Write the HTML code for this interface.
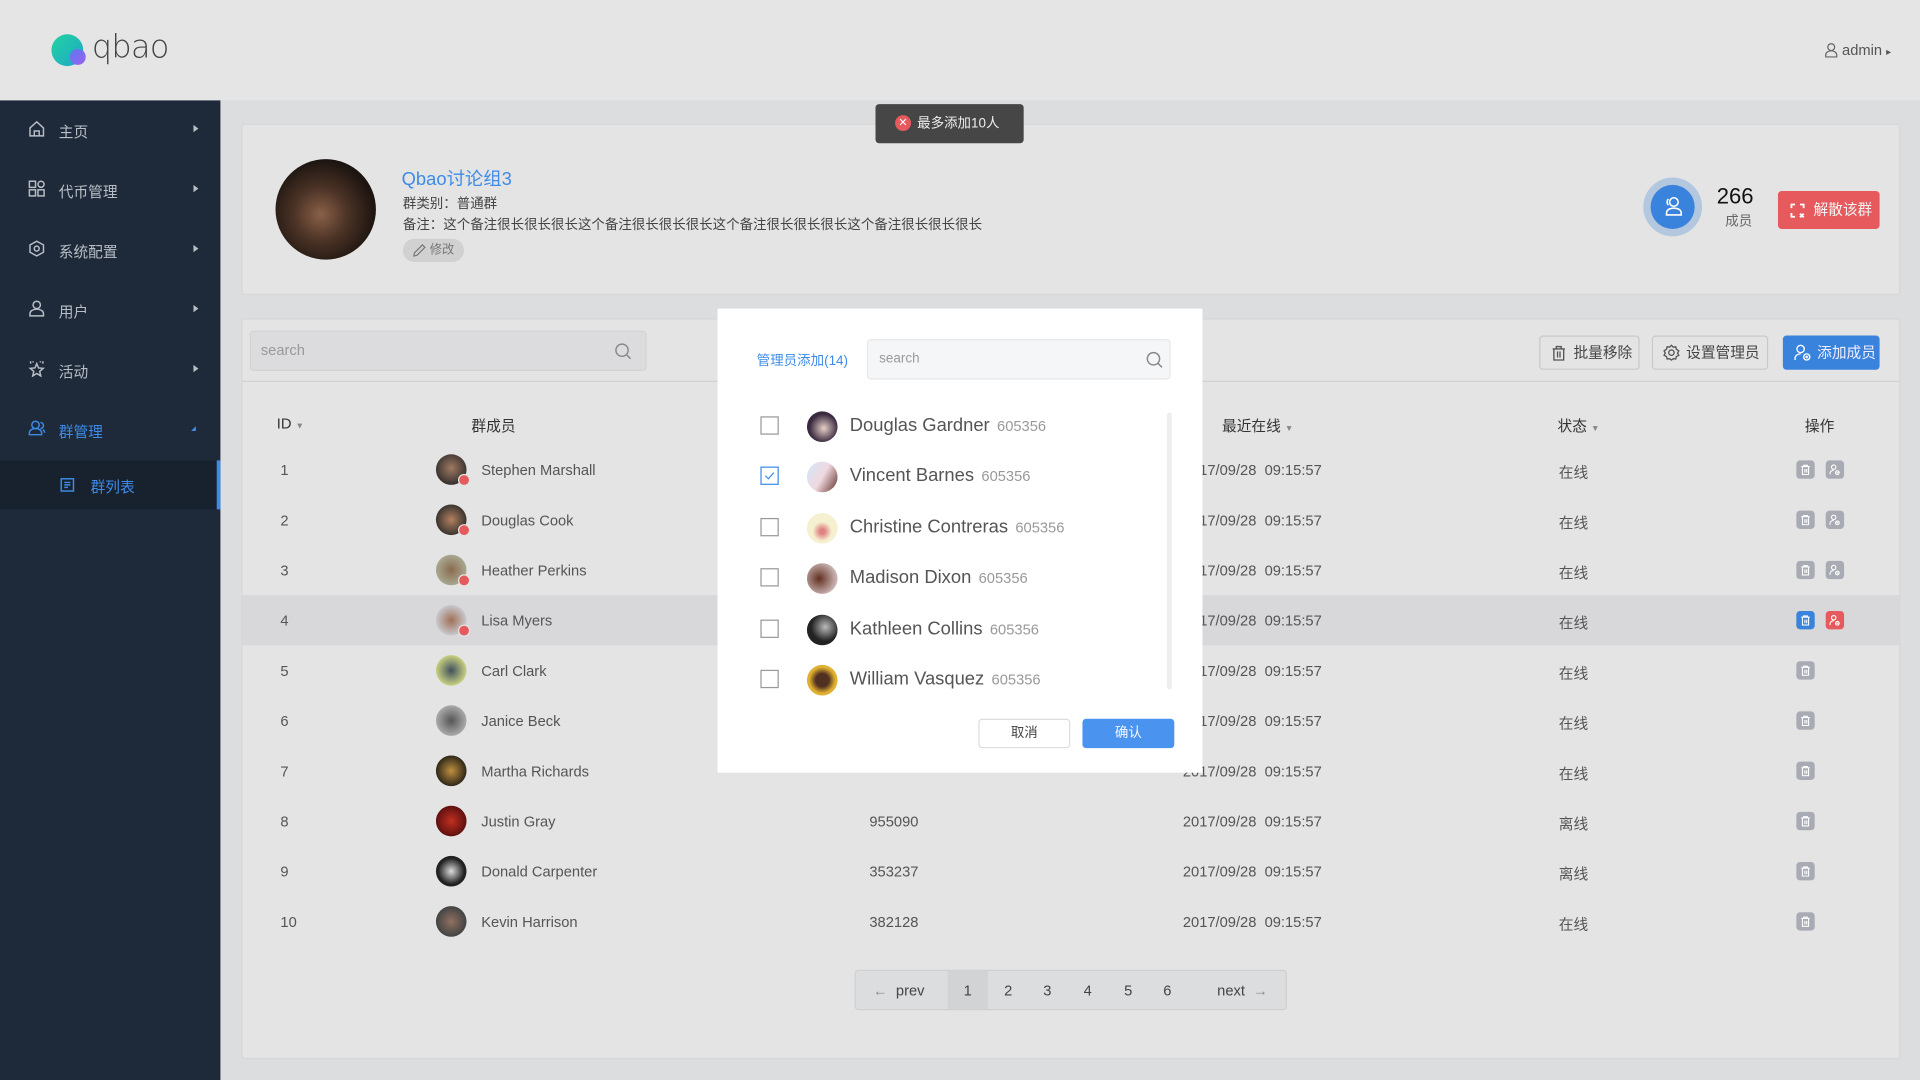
<!DOCTYPE html>
<html><head><meta charset="utf-8">
<style>
*{box-sizing:border-box;margin:0;padding:0}
html,body{width:1920px;height:1080px;overflow:hidden;background:#dcdddf}
#w{position:absolute;left:0;top:0;width:1568px;height:882px;transform:scale(1.22449);transform-origin:0 0;font-family:"Liberation Sans","Noto Sans CJK SC",sans-serif;color:#555;font-size:12px;background:#dcdddf}
.a{position:absolute}
.hdr{left:0;top:0;width:1568px;height:82px;background:#e5e5e5}
.side{left:0;top:82px;width:180px;height:800px;background:#1e2a39}
.mi{position:absolute;left:0;width:180px;height:49px;color:#b9bec6;font-size:12px}
.mi span{position:absolute;left:48px;top:17px}
.mi svg{position:absolute;left:23px;top:16px}
.mi i{position:absolute;left:158px;top:20px;border-left:4px solid #b9bec6;border-top:3.5px solid transparent;border-bottom:3.5px solid transparent}
.card{background:#e4e4e4;border:1px solid #d6d6d6;border-radius:3px}
.row{position:absolute;left:0;width:1354px;height:41px;font-size:12px;color:#555}
.row div{position:absolute;top:14px}
.av{width:25px;height:25px;border-radius:50%;position:absolute;top:8px!important}
.bd{position:absolute;width:10px;height:10px;border-radius:50%;background:#e55a5c;border:1px solid #e4e4e4}
.ib{position:absolute;top:13px!important;width:15px;height:15px;border-radius:3px;background:#a9abb4}
.ib svg{position:absolute;left:3px;top:3px}
.btn{position:absolute;height:28px;border:1px solid #c9c9c9;border-radius:3px;font-size:12px;color:#444;line-height:26px}
.mr{position:absolute;left:0;width:396px;height:41px}
.cb{position:absolute;left:35px;top:13px;width:15px;height:15px;border:1px solid #999;background:#fff}
.mav{position:absolute;left:73px;top:9px;width:25px;height:25px;border-radius:50%}
.mn{position:absolute;left:108px;top:12px;font-size:15px;color:#555}
.mn small{font-size:12px;color:#999;margin-left:6px}
</style></head><body><div id="w">
<svg width="0" height="0" style="position:absolute"><defs>
<symbol id="tr" viewBox="0 0 9 9"><path d="M1 2h7M3 2V1h3v1M2 2v6.5h5V2M4 4v3M5.5 4v3" fill="none" stroke="#fff" stroke-width=".9"/></symbol>
<symbol id="ur" viewBox="0 0 9 9"><circle cx="3.5" cy="2.5" r="1.8" fill="none" stroke="#fff" stroke-width=".9"/><path d="M.5 8.5V7.5c0-1.5 1.5-2.5 3-2.5M6.5 5.5a1.5 1.5 0 110 3 1.5 1.5 0 010-3zM5.7 7h1.6" fill="none" stroke="#fff" stroke-width=".9"/></symbol>
</defs></svg>
<div class="a hdr">
  <div class="a" style="left:42px;top:28px;width:26px;height:26px;border-radius:50%;background:linear-gradient(135deg,#22d3a0,#1ea7c8)"></div>
  <div class="a" style="left:57px;top:40px;width:13px;height:13px;border-radius:50%;background:linear-gradient(135deg,#5a7cf0,#9d5ff0)"></div>
  <div class="a" style="left:75px;top:24px;font-size:26px;color:#444;letter-spacing:-0.5px;font-weight:300;font-family:'DejaVu Sans','Liberation Sans',sans-serif;-webkit-text-stroke:0">qbao</div>
  <div class="a" style="left:1490px;top:34px;font-size:12px;color:#555">
    <svg width="11" height="12" viewBox="0 0 11 12" style="vertical-align:-2px"><circle cx="5.5" cy="3.5" r="2.8" fill="none" stroke="#666"/><path d="M1 11.5v-1.5c0-2 2-3.5 4.5-3.5s4.5 1.5 4.5 3.5v1.5z" fill="none" stroke="#666"/></svg> admin <span style="font-size:8px">▸</span></div>
</div>
<div class="a side">
  <div class="mi" style="top:0"><svg width="14" height="14" viewBox="0 0 14 14" fill="none" stroke="#b9bec6" stroke-width="1.2"><path d="M1.5 6.5L7 1.5l5.5 5V13h-11z M5 13V9h4v4"/></svg><span>主页</span><i></i></div>
  <div class="mi" style="top:49px"><svg width="14" height="14" viewBox="0 0 14 14" fill="none" stroke="#b9bec6" stroke-width="1.2"><rect x="1" y="1" width="5" height="5"/><rect x="1" y="8" width="5" height="5"/><rect x="8" y="8" width="5" height="5"/><circle cx="10.5" cy="3.5" r="2.5"/></svg><span>代币管理</span><i></i></div>
  <div class="mi" style="top:98px"><svg width="14" height="14" viewBox="0 0 14 14" fill="none" stroke="#b9bec6" stroke-width="1.2"><path d="M7 1l5.5 3v6L7 13 1.5 10V4z"/><circle cx="7" cy="7" r="2"/></svg><span>系统配置</span><i></i></div>
  <div class="mi" style="top:147px"><svg width="14" height="14" viewBox="0 0 14 14" fill="none" stroke="#b9bec6" stroke-width="1.2"><circle cx="7" cy="4" r="3"/><path d="M1.5 13v-2c0-2 2.5-3.5 5.5-3.5s5.5 1.5 5.5 3.5v2z"/></svg><span>用户</span><i></i></div>
  <div class="mi" style="top:196px"><svg width="14" height="14" viewBox="0 0 14 14" fill="none" stroke="#b9bec6" stroke-width="1.2"><path d="M7 3l1.5 3.5 3.8.3-2.9 2.5.9 3.7L7 11l-3.3 2 .9-3.7L1.7 6.8l3.8-.3z M2 1v2 M4 1v1 M10 1v1 M12 1v2"/></svg><span>活动</span><i></i></div>
  <div class="mi" style="top:245px;color:#3d8be8"><svg width="14" height="14" viewBox="0 0 14 14" fill="none" stroke="#3d8be8" stroke-width="1.2"><circle cx="6" cy="4" r="3"/><path d="M1 12v-1.5C1 8.5 3 7 6 7s5 1.5 5 3.5V12z M10 2a2.5 2.5 0 010 5 M12 8c1 .6 1.5 1.5 1.5 2.5"/></svg><span>群管理</span><i style="border:none;border-right:4px solid #3d8be8;border-top:4px solid transparent;left:156px;top:21px"></i></div>
  <div class="a" style="left:0;top:294px;width:180px;height:40px;background:#18222f;border-right:3px solid #3d8be8">
    <svg class="a" style="left:49px;top:14px" width="12" height="12" viewBox="0 0 12 12" fill="none" stroke="#3d8be8" stroke-width="1.2"><rect x="1" y="1" width="10" height="10"/><path d="M3.5 4h5M3.5 6h5M3.5 8h3"/></svg>
    <span class="a" style="left:74px;top:13px;color:#3d8be8">群列表</span></div>
</div>

<div class="a card" style="left:197px;top:101px;width:1355px;height:140px">
  <div class="a" style="left:27px;top:28px;width:82px;height:82px;border-radius:50%;background:radial-gradient(circle at 45% 55%,#8a6048 0%,#4a3225 35%,#1c1410 70%,#0d0a08 100%)"></div>
  <div class="a" style="left:130px;top:33px;font-size:15px;color:#3d8be8">Qbao讨论组3</div>
  <div class="a" style="left:131px;top:56px;font-size:11px;color:#444">群类别：普通群</div>
  <div class="a" style="left:131px;top:73px;font-size:11px;color:#444">备注：这个备注很长很长很长这个备注很长很长很长这个备注很长很长很长这个备注很长很长很长</div>
  <div class="a" style="left:131px;top:93px;width:50px;height:19px;border-radius:10px;background:#d1d1d1;font-size:10px;color:#777;line-height:19px;padding-left:22px">修改
    <svg class="a" style="left:8px;top:4px" width="11" height="11" viewBox="0 0 11 11" fill="none" stroke="#777"><path d="M1 10l.5-2.5L8 1l2 2-6.5 6.5z"/></svg></div>
  <div class="a" style="left:1144px;top:43px;width:48px;height:48px;border-radius:50%;background:#b3c7df"></div>
  <div class="a" style="left:1150px;top:49px;width:36px;height:36px;border-radius:50%;background:#3a83dd">
    <svg class="a" style="left:10px;top:9px" width="17" height="17" viewBox="0 0 17 17" fill="none" stroke="#fff" stroke-width="1.3"><circle cx="9" cy="5" r="3.5"/><path d="M3 15.5v-1.5c0-2.5 2.5-4 6-4s6 1.5 6 4v1.5z M4.5 2.5a3.5 3.5 0 000 5"/></svg></div>
  <div class="a" style="left:1204px;top:48px;font-size:18px;color:#111">266</div>
  <div class="a" style="left:1211px;top:70px;font-size:11px;color:#666">成员</div>
  <div class="a" style="left:1254px;top:54px;width:83px;height:31px;border-radius:3px;background:#e65a5d;color:#f3f3f3;font-size:12px;line-height:31px;padding-left:29px">解散该群
    <svg class="a" style="left:10px;top:10px" width="12" height="12" viewBox="0 0 12 12" fill="none" stroke="#fff" stroke-width="1.5"><path d="M1 4V1h3M8 1h3v3M1 8v3h3M8 8.5l3 3M11 8.5l-3 3"/></svg></div>
</div>

<div class="a card" style="left:197px;top:260px;width:1355px;height:605px">
  <div class="a" style="left:0;top:50px;width:1353px;height:1px;background:#d2d2d2"></div>
  <div class="a" style="left:6px;top:9px;width:324px;height:33px;border-radius:3px;background:#dcdcde;border:1px solid #d3d3d3;color:#999;font-size:12px;line-height:31px;padding-left:8px">search
    <svg class="a" style="left:297px;top:9px" width="14" height="14" viewBox="0 0 14 14" fill="none" stroke="#888" stroke-width="1.2"><circle cx="6" cy="6" r="5"/><path d="M9.7 9.7L13 13"/></svg></div>
  <div class="btn" style="left:1059px;top:13px;width:82px;padding-left:27px">批量移除<svg class="a" style="left:9px;top:7px" width="12" height="13" viewBox="0 0 12 13" fill="none" stroke="#555" stroke-width="1.1"><path d="M1 3h10M4 3V1h4v2M2 3v9h8V3M5 5v5M7 5v5"/></svg></div>
  <div class="btn" style="left:1151px;top:13px;width:95px;padding-left:27px">设置管理员<svg class="a" style="left:8px;top:6px" width="14" height="14" viewBox="0 0 14 14" fill="none" stroke="#555" stroke-width="1.1"><circle cx="7" cy="7" r="2.2"/><path d="M7 1l1.5 1.5 2-.3.5 2L13 5.5 12 7.3l1 1.9-2 1-.5 2-2-.3L7 13l-1.5-1.1-2 .3-.5-2-2-1L2 7.3 1 5.5l2-1.3.5-2 2 .3z"/></svg></div>
  <div class="btn" style="left:1258px;top:13px;width:79px;background:#3a83dd;border-color:#3a83dd;color:#eef;padding-left:27px">添加成员<svg class="a" style="left:8px;top:6px" width="14" height="14" viewBox="0 0 14 14" fill="none" stroke="#fff" stroke-width="1.1"><circle cx="5.5" cy="4" r="3"/><path d="M1 13v-1.5c0-2 2-3.5 4.5-3.5 M10.5 8a2.5 2.5 0 110 5 2.5 2.5 0 010-5zM10.5 9.3v2.4M9.3 10.5h2.4"/></svg></div>

  <div class="a" style="left:28px;top:78px;color:#333">ID <span style="font-size:7px;color:#888">▼</span></div>
  <div class="a" style="left:187px;top:78px;color:#333">群成员</div>
  <div class="a" style="left:800px;top:78px;color:#333">最近在线 <span style="font-size:7px;color:#888">▼</span></div>
  <div class="a" style="left:1074px;top:78px;color:#333">状态 <span style="font-size:7px;color:#888">▼</span></div>
  <div class="a" style="left:1276px;top:78px;color:#333">操作</div>

  <div class="a" style="left:0;top:102px;width:1353px;height:410px">
   <div class="row" style="top:0"><div style="left:31px">1</div><div class="av" style="left:158px;background:radial-gradient(circle at 50% 45%,#a07a62,#3a3330 70%)"></div><div class="bd" style="left:176px;top:24px"></div><div style="left:195px">Stephen Marshall</div><div style="left:768px">2017/09/28&nbsp; 09:15:57</div><div style="left:1075px">在线</div><div class="ib" style="left:1269px"><svg width="9" height="9"><use href="#tr"/></svg></div><div class="ib" style="left:1293px"><svg width="9" height="9"><use href="#ur"/></svg></div></div>
   <div class="row" style="top:41px"><div style="left:31px">2</div><div class="av" style="left:158px;background:radial-gradient(circle at 50% 50%,#b48060,#3b3530 70%)"></div><div class="bd" style="left:176px;top:24px"></div><div style="left:195px">Douglas Cook</div><div style="left:768px">2017/09/28&nbsp; 09:15:57</div><div style="left:1075px">在线</div><div class="ib" style="left:1269px"><svg width="9" height="9"><use href="#tr"/></svg></div><div class="ib" style="left:1293px"><svg width="9" height="9"><use href="#ur"/></svg></div></div>
   <div class="row" style="top:82px"><div style="left:31px">3</div><div class="av" style="left:158px;background:radial-gradient(circle at 50% 50%,#8a6a50,#a8a890 70%)"></div><div class="bd" style="left:176px;top:24px"></div><div style="left:195px">Heather Perkins</div><div style="left:768px">2017/09/28&nbsp; 09:15:57</div><div style="left:1075px">在线</div><div class="ib" style="left:1269px"><svg width="9" height="9"><use href="#tr"/></svg></div><div class="ib" style="left:1293px"><svg width="9" height="9"><use href="#ur"/></svg></div></div>
   <div class="row" style="top:123px;background:#d8d8da"><div style="left:31px">4</div><div class="av" style="left:158px;background:radial-gradient(circle at 50% 50%,#a07058,#c8c8cc 70%)"></div><div class="bd" style="left:176px;top:24px"></div><div style="left:195px">Lisa Myers</div><div style="left:768px">2017/09/28&nbsp; 09:15:57</div><div style="left:1075px">在线</div><div class="ib" style="left:1269px;background:#3a83dd"><svg width="9" height="9"><use href="#tr"/></svg></div><div class="ib" style="left:1293px;background:#e65a5d"><svg width="9" height="9"><use href="#ur"/></svg></div></div>
   <div class="row" style="top:164px"><div style="left:31px">5</div><div class="av" style="left:158px;background:radial-gradient(circle at 50% 50%,#405060,#c8d080 70%)"></div><div style="left:195px">Carl Clark</div><div style="left:768px">2017/09/28&nbsp; 09:15:57</div><div style="left:1075px">在线</div><div class="ib" style="left:1269px"><svg width="9" height="9"><use href="#tr"/></svg></div></div>
   <div class="row" style="top:205px"><div style="left:31px">6</div><div class="av" style="left:158px;background:radial-gradient(circle at 50% 50%,#555,#aaa 70%)"></div><div style="left:195px">Janice Beck</div><div style="left:768px">2017/09/28&nbsp; 09:15:57</div><div style="left:1075px">在线</div><div class="ib" style="left:1269px"><svg width="9" height="9"><use href="#tr"/></svg></div></div>
   <div class="row" style="top:246px"><div style="left:31px">7</div><div class="av" style="left:158px;background:radial-gradient(circle at 50% 50%,#c09040,#302818 70%)"></div><div style="left:195px">Martha Richards</div><div style="left:768px">2017/09/28&nbsp; 09:15:57</div><div style="left:1075px">在线</div><div class="ib" style="left:1269px"><svg width="9" height="9"><use href="#tr"/></svg></div></div>
   <div class="row" style="top:287px"><div style="left:31px">8</div><div class="av" style="left:158px;background:radial-gradient(circle at 50% 50%,#c03020,#601010 70%)"></div><div style="left:195px">Justin Gray</div><div style="left:512px">955090</div><div style="left:768px">2017/09/28&nbsp; 09:15:57</div><div style="left:1075px">离线</div><div class="ib" style="left:1269px"><svg width="9" height="9"><use href="#tr"/></svg></div></div>
   <div class="row" style="top:328px"><div style="left:31px">9</div><div class="av" style="left:158px;background:radial-gradient(circle at 50% 50%,#ddd,#222 60%)"></div><div style="left:195px">Donald Carpenter</div><div style="left:512px">353237</div><div style="left:768px">2017/09/28&nbsp; 09:15:57</div><div style="left:1075px">离线</div><div class="ib" style="left:1269px"><svg width="9" height="9"><use href="#tr"/></svg></div></div>
   <div class="row" style="top:369px"><div style="left:31px">10</div><div class="av" style="left:158px;background:radial-gradient(circle at 50% 50%,#907060,#444 70%)"></div><div style="left:195px">Kevin Harrison</div><div style="left:512px">382128</div><div style="left:768px">2017/09/28&nbsp; 09:15:57</div><div style="left:1075px">在线</div><div class="ib" style="left:1269px"><svg width="9" height="9"><use href="#tr"/></svg></div></div>
  </div>

  <div class="a" style="left:500px;top:531px;width:353px;height:33px;border:1px solid #d0d0d0;border-radius:3px;background:#dcdddf;font-size:12px;color:#444">
    <div class="a" style="left:75px;top:0;width:33px;height:31px;background:#d2d3d5"></div>
    <span class="a" style="left:14px;top:9px"><span style="color:#888">←</span>&nbsp; prev</span>
    <span class="a" style="left:88px;top:9px">1</span><span class="a" style="left:121px;top:9px">2</span><span class="a" style="left:153px;top:9px">3</span><span class="a" style="left:186px;top:9px">4</span><span class="a" style="left:219px;top:9px">5</span><span class="a" style="left:251px;top:9px">6</span>
    <span class="a" style="left:295px;top:9px">next&nbsp; <span style="color:#888">→</span></span>
  </div>
</div>

<div class="a" style="left:715px;top:85px;width:121px;height:32px;border-radius:3px;background:#464646;color:#eee;font-size:11px;line-height:32px;padding-left:34px">最多添加10人
  <div class="a" style="left:16px;top:9px;width:13px;height:13px;border-radius:50%;background:#e65a5d;color:#fff;font-size:9px;line-height:13px;text-align:center">✕</div></div>

<div class="a" style="left:586px;top:252px;width:396px;height:379px;background:#fff">
  <div class="a" style="left:32px;top:34px;font-size:11px;color:#3d8be8">管理员添加(14)</div>
  <div class="a" style="left:122px;top:25px;width:248px;height:33px;border:1px solid #e8e8e8;border-radius:3px;background:#f5f6f8;color:#999;font-size:11px;line-height:31px;padding-left:9px">search
    <svg class="a" style="left:227px;top:9px" width="14" height="14" viewBox="0 0 14 14" fill="none" stroke="#888" stroke-width="1.2"><circle cx="6" cy="6" r="5"/><path d="M9.7 9.7L13 13"/></svg></div>
  <div class="a" style="left:367px;top:85px;width:4px;height:226px;border-radius:2px;background:#eee"></div>
  <div class="mr" style="top:75px"><div class="cb"></div><div class="mav" style="background:radial-gradient(circle at 55% 55%,#e8d0c8,#3a2a40 60%)"></div><div class="mn">Douglas Gardner<small>605356</small></div></div>
  <div class="mr" style="top:116px"><div class="cb" style="border-color:#3d8be8"><svg width="13" height="13" viewBox="0 0 13 13" style="position:absolute;left:0;top:0" fill="none" stroke="#3d8be8"><path d="M3 6.5l2.5 2.5L10 4"/></svg></div><div class="mav" style="background:linear-gradient(120deg,#d0e8f8,#f0d8e0 50%,#603028)"></div><div class="mn">Vincent Barnes<small>605356</small></div></div>
  <div class="mr" style="top:158px"><div class="cb"></div><div class="mav" style="background:radial-gradient(circle at 50% 60%,#e08080 10%,#f5f0d0 40%)"></div><div class="mn">Christine Contreras<small>605356</small></div></div>
  <div class="mr" style="top:199px"><div class="cb"></div><div class="mav" style="background:radial-gradient(circle at 40% 50%,#603020,#c8b0b0 70%)"></div><div class="mn">Madison Dixon<small>605356</small></div></div>
  <div class="mr" style="top:241px"><div class="cb"></div><div class="mav" style="background:radial-gradient(circle at 60% 40%,#bbb,#222 55%)"></div><div class="mn">Kathleen Collins<small>605356</small></div></div>
  <div class="mr" style="top:282px"><div class="cb"></div><div class="mav" style="background:radial-gradient(circle at 50% 50%,#503020 30%,#e0b030 60%)"></div><div class="mn">William Vasquez<small>605356</small></div></div>
  <div class="a" style="left:213px;top:335px;width:75px;height:24px;border:1px solid #ddd;border-radius:3px;text-align:center;line-height:22px;font-size:11px;color:#444">取消</div>
  <div class="a" style="left:298px;top:335px;width:75px;height:24px;border-radius:3px;background:#4a94f0;text-align:center;line-height:24px;font-size:11px;color:#f4f8ff">确认</div>
</div>
</div></body></html>
